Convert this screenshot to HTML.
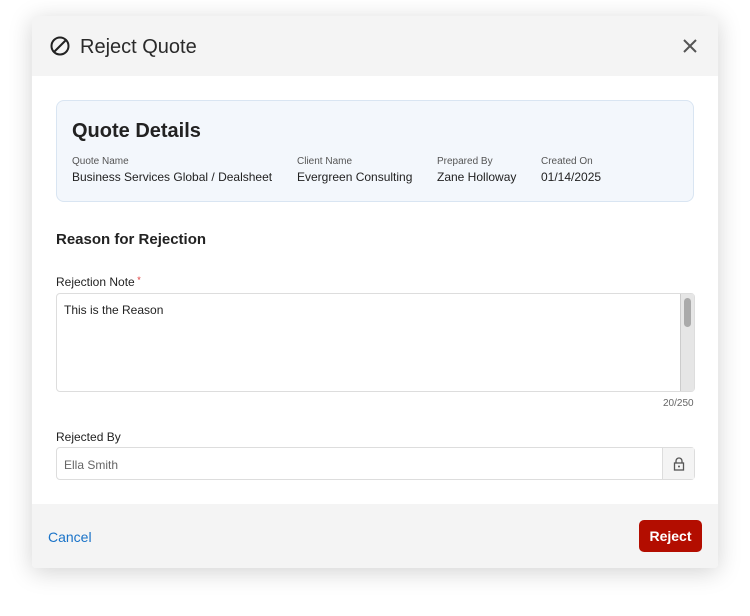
<!DOCTYPE html>
<html><head><style>
*{box-sizing:border-box;margin:0;padding:0}
body{width:750px;height:616px;background:#fff;font-family:"Liberation Sans",sans-serif;position:relative;overflow:hidden;color:#222}
.m{position:absolute;left:32px;top:16px;width:686px;height:552px;background:#fff;box-shadow:0 4px 24px rgba(0,0,0,.18);border-radius:4px;overflow:hidden}
.hd{position:absolute;left:0;top:0;width:686px;height:60px;background:#f4f4f4}
.ab{position:absolute;white-space:nowrap}
.card{position:absolute;left:24px;top:84px;width:638px;height:102px;background:#f3f7fc;border:1px solid #d9e5f2;border-radius:8px}
.lbl{font-size:10px;color:#555}
.val{font-size:12px;color:#222}
.ta{position:absolute;left:24px;top:277px;width:639px;height:99px;border:1px solid #ddd;border-radius:4px;background:#fff}
.sb{position:absolute;right:0;top:0;width:14px;height:97px;background:#e6e6e6;border-left:1px solid #ccc}
.th{position:absolute;left:3px;top:4px;width:7px;height:29px;background:#aaa;border-radius:4px}
.in{position:absolute;left:24px;top:431px;width:639px;height:33px;border:1px solid #ddd;border-radius:4px;background:#fff}
.lk{position:absolute;right:0;top:0;width:32px;height:31px;background:#f4f4f4;border-left:1px solid #ddd}
.ft{position:absolute;left:0;top:488px;width:686px;height:64px;background:#f4f4f4}
.btn{position:absolute;left:607px;top:16px;width:63px;height:32px;background:#b30d00;border-radius:5px;color:#fff;font-weight:bold;font-size:14px;text-align:center;line-height:32px}
</style></head><body>
<div class="m">
<div class="hd">
<svg class="ab" style="left:18px;top:20px" width="20" height="20" viewBox="0 0 20 20"><circle cx="10" cy="10" r="8.5" fill="none" stroke="#222" stroke-width="2"/><line x1="4" y1="16" x2="16" y2="4" stroke="#222" stroke-width="2"/></svg>
<div class="ab" style="left:48px;top:20px;font-size:20px;color:#2a2a2a">Reject Quote</div>
<svg class="ab" style="left:651px;top:23px" width="14" height="14" viewBox="0 0 14 14"><path d="M1 1L13 13M13 1L1 13" stroke="#555" stroke-width="2"/></svg>
</div>
<div class="card">
<div class="ab" style="left:15px;top:19px;font-size:20px;font-weight:bold">Quote Details</div>
<div class="ab lbl" style="left:15px;top:55px">Quote Name</div>
<div class="ab val" style="left:15px;top:69px">Business Services Global / Dealsheet</div>
<div class="ab lbl" style="left:240px;top:55px">Client Name</div>
<div class="ab val" style="left:240px;top:69px">Evergreen Consulting</div>
<div class="ab lbl" style="left:380px;top:55px">Prepared By</div>
<div class="ab val" style="left:380px;top:69px">Zane Holloway</div>
<div class="ab lbl" style="left:484px;top:55px">Created On</div>
<div class="ab val" style="left:484px;top:69px">01/14/2025</div>
</div>
<div class="ab" style="left:24px;top:215px;font-size:15px;font-weight:bold">Reason for Rejection</div>
<div class="ab" style="left:24px;top:259px;font-size:12px">Rejection Note<span style="color:#d33;font-size:9px;vertical-align:top"> *</span></div>
<div class="ta"><div class="ab" style="left:7px;top:9px;font-size:12px">This is the Reason</div><div class="sb"><div class="th"></div></div></div>
<div class="ab" style="left:631px;top:382px;font-size:10px;color:#666">20/250</div>
<div class="ab" style="left:24px;top:414px;font-size:12px">Rejected By</div>
<div class="in"><div class="ab" style="left:7px;top:10px;font-size:12px;color:#666">Ella Smith</div>
<div class="lk"><svg class="ab" style="left:10px;top:9px" width="12" height="14" viewBox="0 0 12 14"><path d="M3 6V4a3 3 0 0 1 6 0v2" fill="none" stroke="#555" stroke-width="1.3"/><rect x="1.5" y="6" width="9" height="7" fill="none" stroke="#555" stroke-width="1.3"/><circle cx="6" cy="9.5" r="1" fill="#555"/></svg></div></div>
<div class="ft">
<div class="ab" style="left:16px;top:25px;font-size:14px;color:#1a73c8">Cancel</div>
<div class="btn">Reject</div>
</div>
</div>
</body></html>
